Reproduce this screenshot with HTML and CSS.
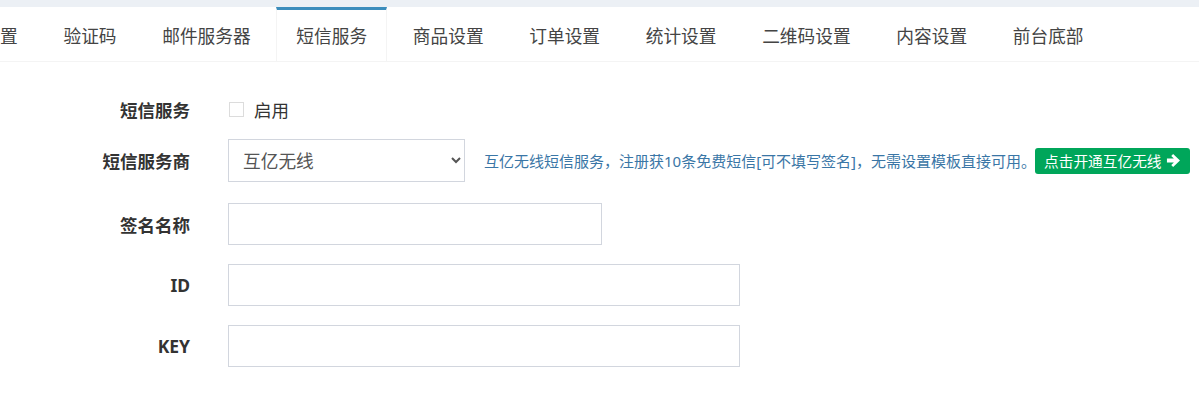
FILE: index.html
```html
<!DOCTYPE html>
<html lang="zh-CN">
  <head>
    <meta charset="UTF-8" />
    <meta name="viewport" content="width=device-width, initial-scale=1.0" />
    <title>系统设置 - 短信服务</title>
    <link rel="stylesheet" href="styles.css">
  </head>
  <body>
    <div class="top-band"></div>

    <!-- Вкладки настроек -->
    <div class="tabs-box">
      <ul class="nav-tabs">
        <li><a href="#">网站设置</a></li>
        <li><a href="#">验证码</a></li>
        <li><a href="#">邮件服务器</a></li>
        <li class="active"><a href="#">短信服务</a></li>
        <li><a href="#">商品设置</a></li>
        <li><a href="#">订单设置</a></li>
        <li><a href="#">统计设置</a></li>
        <li><a href="#">二维码设置</a></li>
        <li><a href="#">内容设置</a></li>
        <li><a href="#">前台底部</a></li>
      </ul>
    </div>

    <form class="sms-form">
      <div class="form-group check-row">
        <label class="control-label">短信服务</label>
        <label class="check">
          <input type="checkbox" name="sms_open" />
          <span>启用</span>
        </label>
      </div>

      <div class="form-group select-row">
        <label class="control-label" for="sms-provider">短信服务商</label>
        <div class="control-line">
          <select id="sms-provider" class="form-control select">
            <option>互亿无线</option>
            <option>阿里云短信</option>
          </select>
          <span class="help-text">互亿无线短信服务，注册获10条免费短信[可不填写签名]，无需设置模板直接可用。</span>
          <a class="btn-success" href="#">点击开通互亿无线
            <svg class="arrow" viewBox="0 0 16 16" width="15" height="15">
              <path d="M1 5.9h7.4L5.6 3.1l2-2L14.9 8l-7.3 6.9-2-2 2.8-2.8H1z" fill="#fff"/>
            </svg>
          </a>
        </div>
      </div>

      <div class="form-group">
        <label class="control-label" for="sign-name">签名名称</label>
        <input type="text" id="sign-name" class="form-control short" />
      </div>

      <div class="form-group">
        <label class="control-label" for="sms-id">ID</label>
        <input type="text" id="sms-id" class="form-control wide" />
      </div>

      <div class="form-group">
        <label class="control-label" for="sms-key">KEY</label>
        <input type="text" id="sms-key" class="form-control wide" />
      </div>
    </form>
  </body>
</html>
```

FILE: styles.css
```css
/* Общие стили */
body {
  margin: 0;
  padding: 0;
  background-color: #fff;
  font-family: "Noto Sans", "Noto Sans CJK SC", sans-serif;
  color: #444;
  overflow: hidden;
}

.top-band {
  height: 7px;
  background-color: #ecf0f5;
}

/* Вкладки */
.tabs-box {
  border-bottom: 1px solid #f4f4f4;
  overflow: hidden;
}

.nav-tabs {
  list-style: none;
  margin: 0 0 0 -73px;
  padding: 0;
  display: flex;
  white-space: nowrap;
}

.nav-tabs li {
  margin-right: 5.7px;
  border-top: 3px solid transparent;
  border-left: 1px solid transparent;
  border-right: 1px solid transparent;
}

.nav-tabs li a {
  display: block;
  padding: 0 19px;
  height: 51px;
  line-height: 53px;
  font-size: 17.7px;
  color: #444;
  text-decoration: none;
}

.nav-tabs li.active {
  border-top-color: #3c8dbc;
  border-left-color: #f4f4f4;
  border-right-color: #f4f4f4;
}

/* Форма */
.sms-form {
  padding-top: 33px;
}

.form-group {
  display: flex;
  align-items: center;
  margin-bottom: 19px;
}

.control-label {
  width: 190px;
  flex: none;
  margin-right: 38px;
  text-align: right;
  font-weight: bold;
  font-size: 17.5px;
  color: #333;
}

.check-row {
  height: 28px;
  margin-bottom: 16px;
}

.select-row {
  margin-bottom: 21px;
}

.check {
  display: flex;
  align-items: center;
  font-size: 17.5px;
  color: #333;
}

.check input {
  appearance: none;
  width: 15px;
  height: 15px;
  margin: 0 10px 0 1px;
  border: 1px solid #dcdcdc;
  background: #fff;
}

.control-line {
  display: flex;
  align-items: center;
}

.form-control {
  box-sizing: border-box;
  height: 42px;
  border: 1px solid #d2d6de;
  border-radius: 0;
  background: #fff;
  font-family: inherit;
  font-size: 17.7px;
  color: #555;
}

.select {
  width: 237px;
  height: 43px;
  padding: 0 10px;
}

.short {
  width: 374px;
}

.wide {
  width: 512px;
}

.help-text {
  margin-left: 19px;
  font-size: 15px;
  color: #3a76a6;
}

.btn-success {
  display: flex;
  align-items: center;
  gap: 4px;
  margin-left: -1px;
  padding: 0 9px;
  height: 26px;
  background-color: #00a65a;
  border-radius: 3px;
  color: #fff;
  font-size: 14.7px;
  text-decoration: none;
}
```
